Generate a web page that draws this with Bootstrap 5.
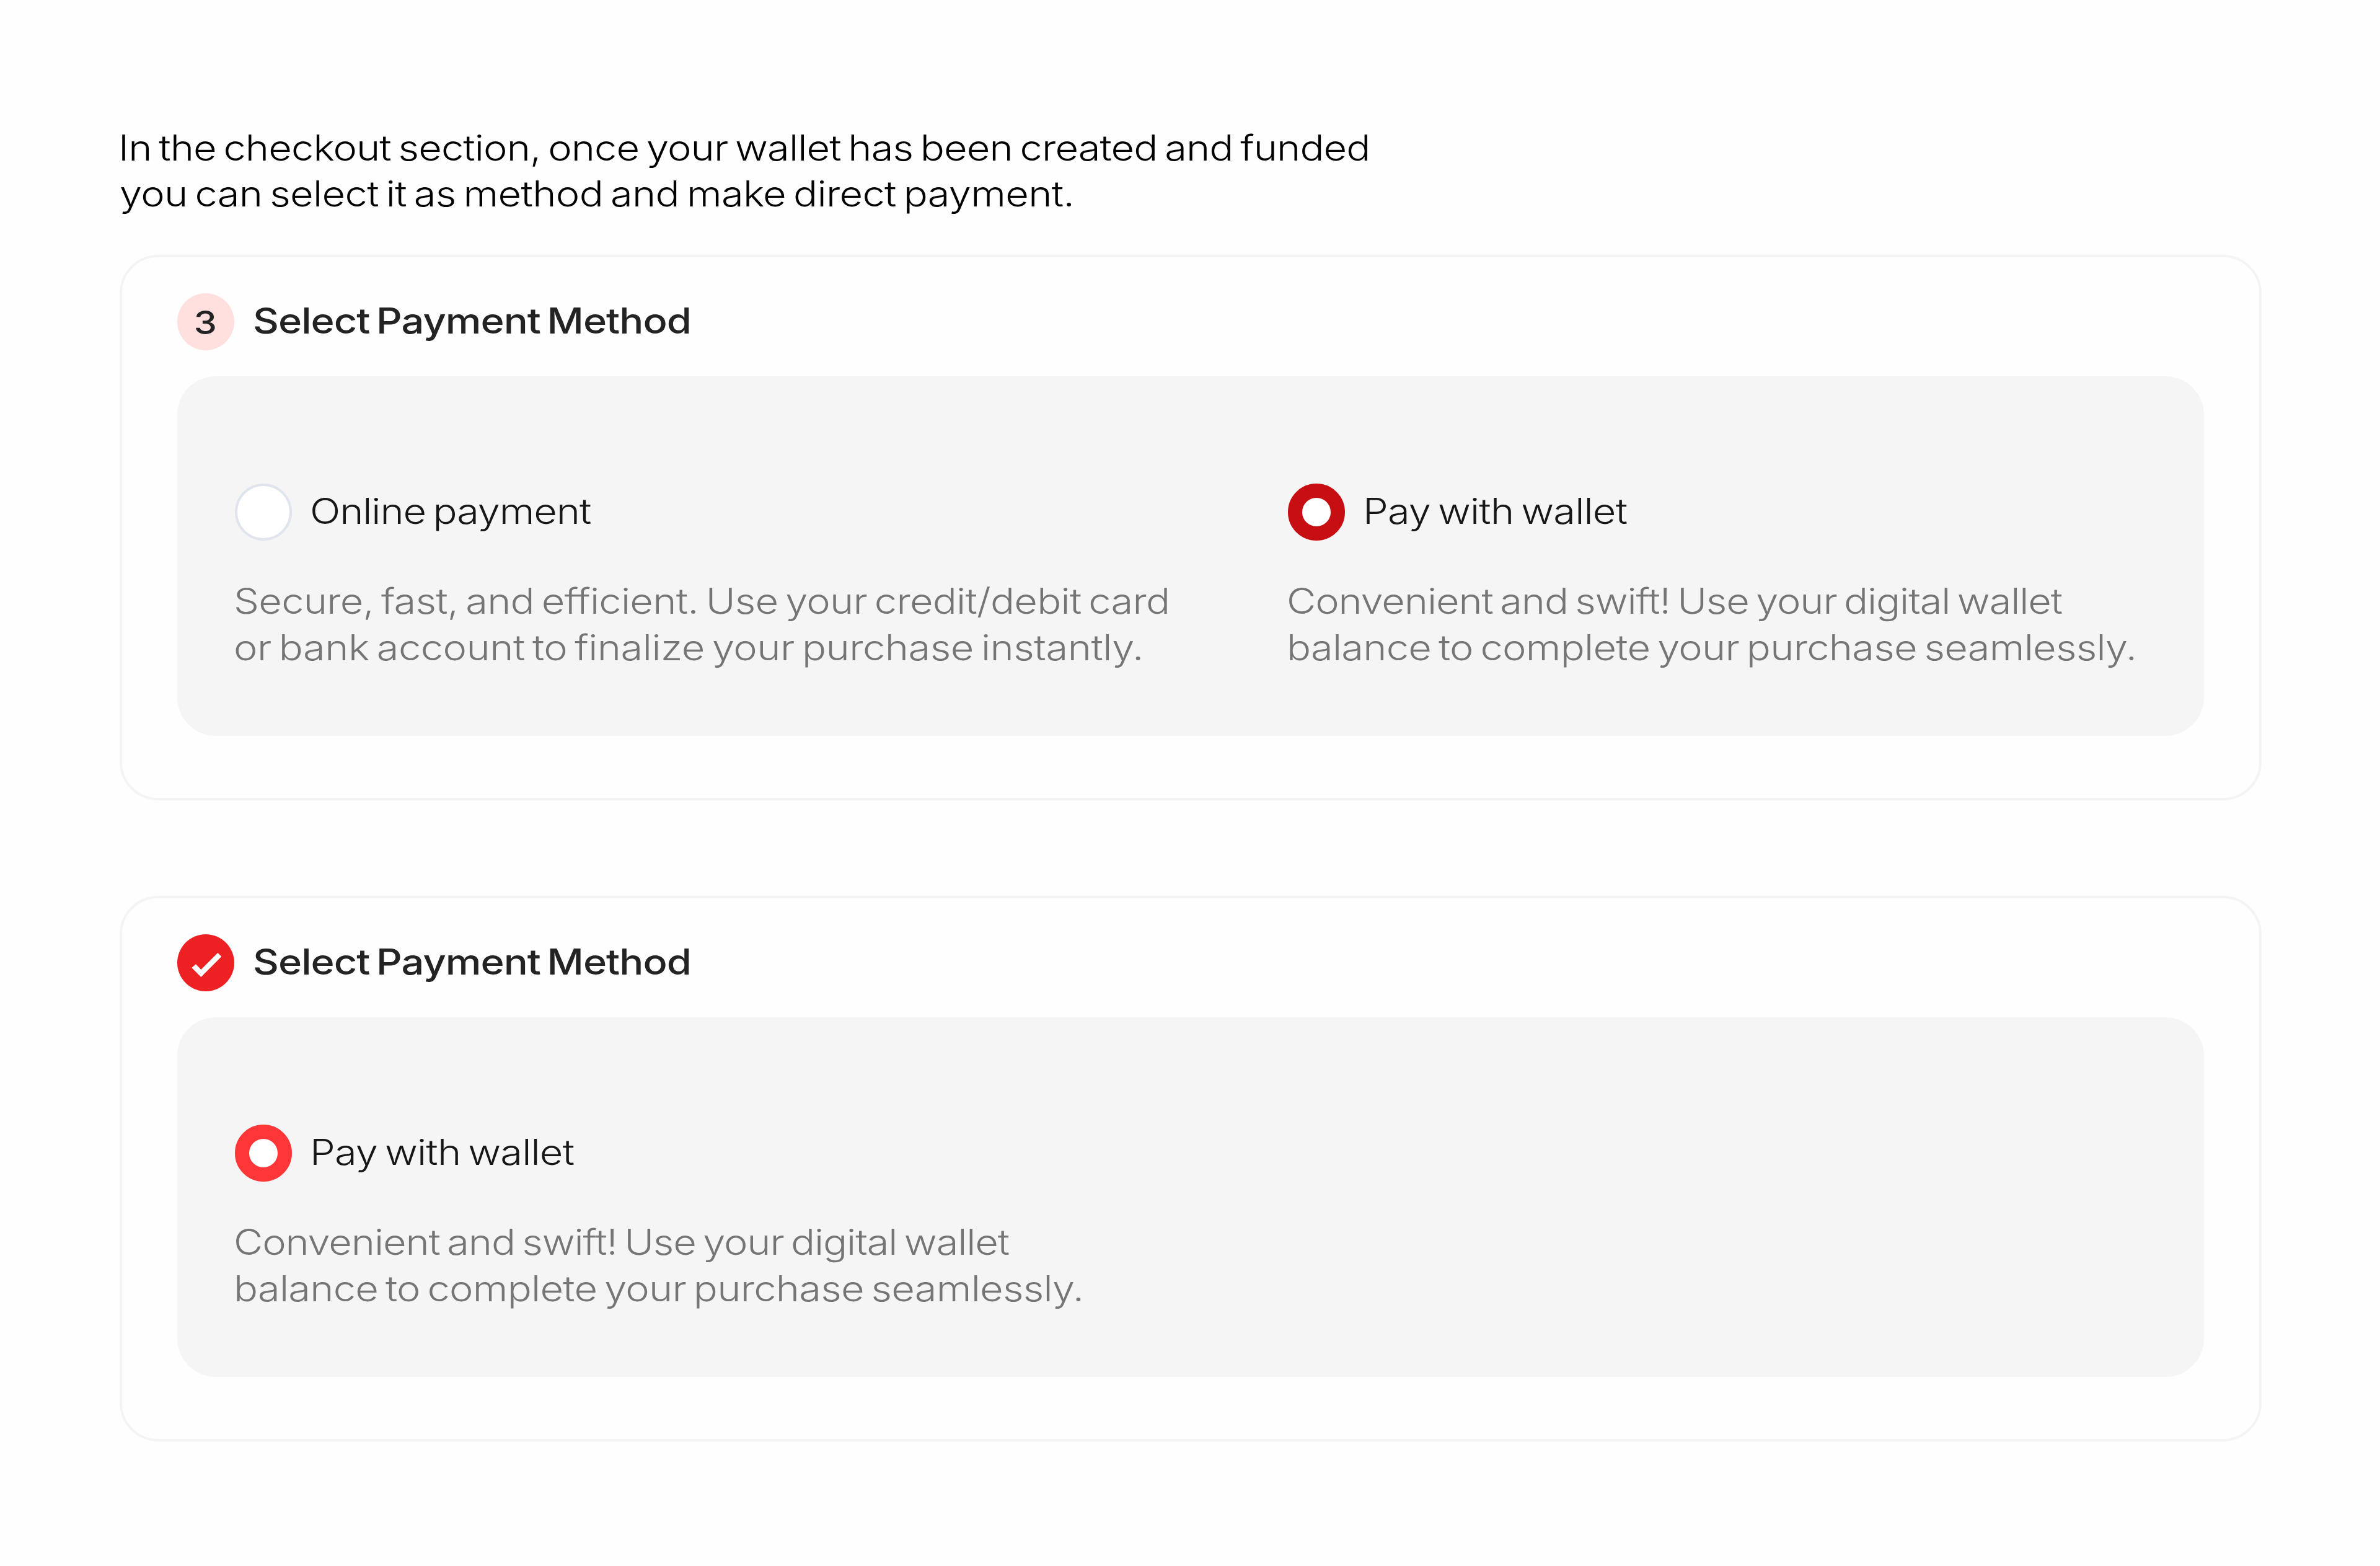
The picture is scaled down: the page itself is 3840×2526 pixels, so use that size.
<!DOCTYPE html>
<html lang="en">
<head>
<meta charset="utf-8">
<meta name="viewport" content="width=device-width, initial-scale=1">
<title>Select Payment Method</title>
<link href="https://cdn.jsdelivr.net/npm/bootstrap@5.3.0/dist/css/bootstrap.min.css" rel="stylesheet">
<style>
  body { font-family: Inter, "Liberation Sans", sans-serif; font-size: 57px; font-weight: 300; background: #fefefe; color: #000; }
  .page { padding: 202px 191px 0 193px; }
  .intro { line-height: 73.5px; margin-bottom: 62px; }
  /* wide grotesque look: stretched glyphs with tight tracking */
  .wide { display: block; width: max-content; white-space: nowrap; transform: scaleX(1.14); transform-origin: 0 50%; word-spacing: -5px; letter-spacing: -.98px; }
  .intro .first { letter-spacing: -.79px; margin-left: -2px; }
  .intro .second { letter-spacing: -.6px; }
  .step { height: 880px; padding: 58px 89px 0 88.5px; border: 4px solid #f4f4f4; border-radius: 62px; background: #fefefe; }
  .step + .step { margin-top: 154px; }
  .step-head { gap: 30px; margin-bottom: 42px; color: #232323; font-weight: 500; }
  .step-head .wide, .option-label .wide { line-height: 92px; }
  .step-head .wide { letter-spacing: -.86px; }
  .step-head h2 { font-size: 57px; font-weight: 500; margin: -2px 0 0; }
  .step-badge { width: 92px; height: 92px; background: #ffe0df; font-size: 52px; line-height: 92px; padding-top: 2px; }
  .step-badge span { transform: scaleX(1.14); }
  .step-check { width: 92px; height: 92px; }
  .panel { height: 580px; padding: 173px 0 0 93px; border-radius: 62px; background: #f5f5f5; }
  .option { width: 1699px; }
  .option-label { gap: 29px; height: 92px; color: #161616; margin-bottom: 60px; }
  .option-label .wide { margin-top: -1px; }
  .option-label .pay { letter-spacing: -.72px; }
  .dial { width: 92px; height: 92px; background: #fff; }
  .dial.off { border: 4px solid #e0e4ed; }
  .dial.on { border: 23px solid #c70e12; }
  .dial.active { border: 23px solid #ff3638; }
  .desc { line-height: 75.3px; color: #757575; margin: 0 0 0 -2px; }
  .desc .secure { letter-spacing: -.68px; }
  .desc .bank { letter-spacing: -.46px; }
  .desc .convenient { letter-spacing: -1px; }
  .desc .balance { letter-spacing: -.68px; }
</style>
</head>
<body>
<main class="page">
  <p class="intro">
    <span class="wide first">In the checkout section, once your wallet has been created and funded</span>
    <span class="wide second">you can select it as method and make direct payment.</span>
  </p>

  <section class="step">
    <div class="step-head d-flex align-items-center">
      <div class="step-badge rounded-circle d-flex justify-content-center flex-shrink-0"><span>3</span></div>
      <h2><span class="wide">Select Payment Method</span></h2>
    </div>
    <div class="panel d-flex">
      <div class="option flex-shrink-0">
        <div class="option-label d-flex">
          <span class="dial off rounded-circle flex-shrink-0"></span>
          <span class="wide">Online payment</span>
        </div>
        <p class="desc">
          <span class="wide secure">Secure, fast, and efficient. Use your credit/debit card</span>
          <span class="wide bank">or bank account to finalize your purchase instantly.</span>
        </p>
      </div>
      <div class="flex-grow-1">
        <div class="option-label d-flex">
          <span class="dial on rounded-circle flex-shrink-0"></span>
          <span class="wide pay">Pay with wallet</span>
        </div>
        <p class="desc">
          <span class="wide convenient">Convenient and swift! Use your digital wallet</span>
          <span class="wide balance">balance to complete your purchase seamlessly.</span>
        </p>
      </div>
    </div>
  </section>

  <section class="step">
    <div class="step-head d-flex align-items-center">
      <svg class="step-check flex-shrink-0" viewBox="0 0 276 276" aria-hidden="true">
        <circle cx="138" cy="138" r="138" fill="#ed2024"/>
        <path d="M70 162 90 145 115 171 196 90 214 108 115 207Z" fill="#fff"/>
      </svg>
      <h2><span class="wide">Select Payment Method</span></h2>
    </div>
    <div class="panel">
      <div class="option-label d-flex">
        <span class="dial active rounded-circle flex-shrink-0"></span>
        <span class="wide pay">Pay with wallet</span>
      </div>
      <p class="desc">
        <span class="wide convenient">Convenient and swift! Use your digital wallet</span>
        <span class="wide balance">balance to complete your purchase seamlessly.</span>
      </p>
    </div>
  </section>
</main>
<script src="https://cdn.jsdelivr.net/npm/bootstrap@5.3.0/dist/js/bootstrap.bundle.min.js"></script>
</body>
</html>
